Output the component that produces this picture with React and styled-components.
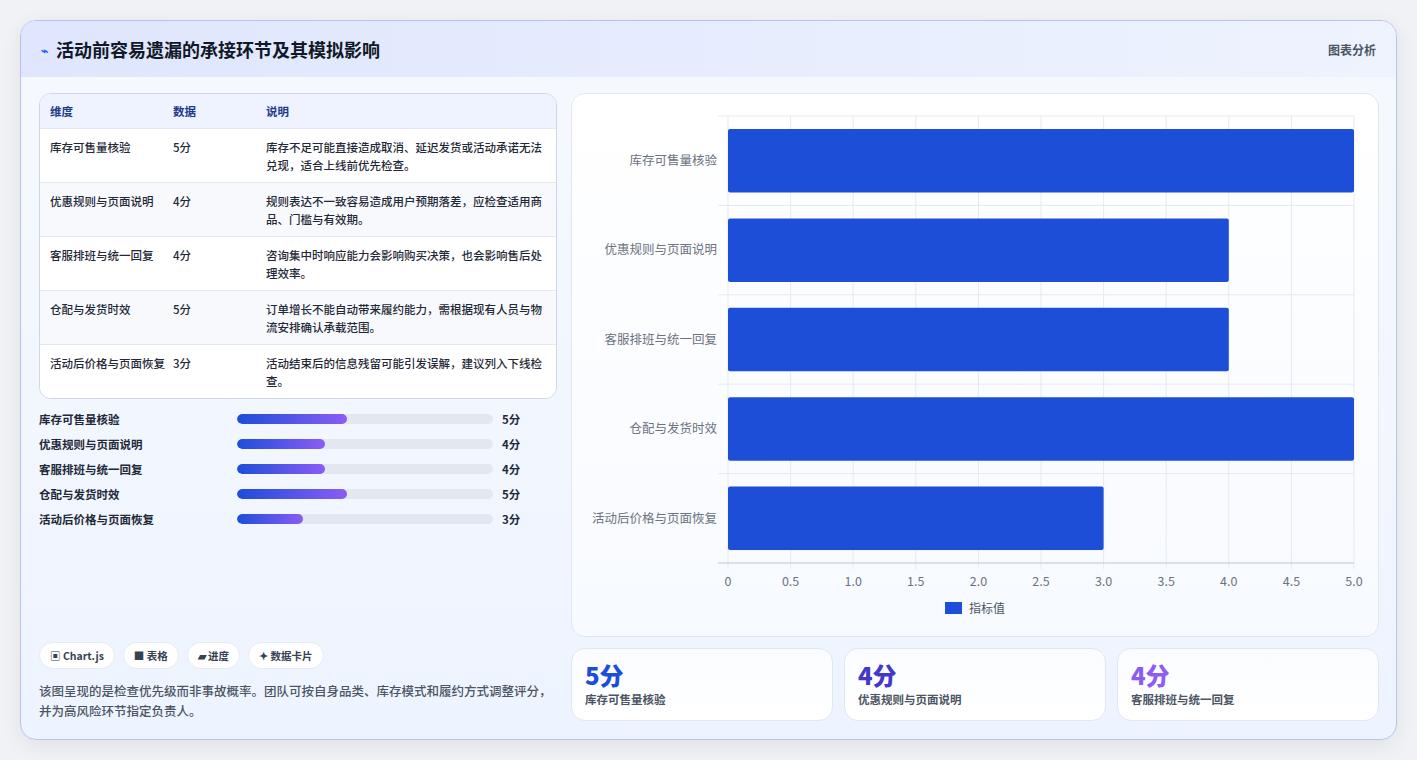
import React from "react";
import styled, { createGlobalStyle } from "styled-components";

const G = createGlobalStyle`
  body{margin:0;background:#f1f2f5;font-family:"Noto Sans CJK SC","Noto Sans",sans-serif;}
  *{box-sizing:border-box;}
`;
const Page = styled.div`padding:20px 20px 20px 20px;height:760px;`;
const Card = styled.div`
  width:1377px;height:720px;border:1px solid #b9c3ea;border-radius:16px;overflow:hidden;
  background:linear-gradient(180deg,#f6f9ff,#eef4ff);box-shadow:0 6px 20px rgba(30,40,80,.08);
  display:flex;flex-direction:column;`;
const Header = styled.div`
  height:56px;flex:none;display:flex;align-items:center;justify-content:space-between;padding:0 20px;
  background:linear-gradient(90deg,#dfe6fd,#eef3fe);`;
const Title = styled.h1`margin:0;font-size:18px;font-weight:700;color:#111827;display:flex;align-items:center;gap:8px;`;
const Tag = styled.span`font-size:12px;color:#4b5563;font-weight:600;`;
const Body = styled.div`flex:1;display:grid;grid-template-columns:518px 808px;gap:14px;padding:16px 18px 18px 18px;`;
const Left = styled.div`display:flex;flex-direction:column;`;
const Table = styled.div`border:1px solid #cfd6ea;border-radius:12px;overflow:hidden;background:#fff;`;
const Row = styled.div`
  display:grid;grid-template-columns:123px 93px 1fr;padding:${p=>p.$h?"8px 10px":"9px 10px 8px"};
  min-height:${p=>p.$h?"33px":"53px"};font-size:11.5px;line-height:18px;
  color:${p=>p.$h?"#1e3a8a":"#1f2937"};font-weight:${p=>p.$h?700:500};
  background:${p=>p.$h?"#eef3ff":p.$alt?"#f7f9fd":"#fff"};
  border-top:${p=>p.$h?"none":"1px solid #e3e8f3"};`;
const Bars = styled.div`display:flex;flex-direction:column;gap:7px;margin-top:11px;`;
const BarRow = styled.div`display:grid;grid-template-columns:189px 256px 1fr;column-gap:9px;align-items:center;height:18px;font-size:11.5px;font-weight:600;color:#1f2937;`;
const Track = styled.div`height:10px;border-radius:5px;background:#e3e7f0;overflow:hidden;`;
const Fill = styled.div`height:100%;border-radius:5px;background:linear-gradient(90deg,#1d4ed8,#8b5cf6);`;
const Spacer = styled.div`flex:1;`;
const Chips = styled.div`display:flex;gap:8px;`;
const Chip = styled.span`padding:5px 10px;border-radius:14px;background:#fff;border:1px solid #e6eaf3;font-size:10.5px;font-weight:700;color:#374151;`;
const Note = styled.p`margin:12px 0 0;font-size:12.5px;line-height:20px;color:#4b5563;font-weight:500;`;
const Right = styled.div`display:flex;flex-direction:column;gap:11px;`;
const ChartPanel = styled.div`height:544px;border:1px solid #e1e6f2;border-radius:14px;background:linear-gradient(180deg,#fff,#f7faff);`;
const Stats = styled.div`display:grid;grid-template-columns:repeat(3,1fr);gap:11px;flex:1;`;
const Stat = styled.div`border:1px solid #e1e6f2;border-radius:14px;background:linear-gradient(180deg,#fafcff,#fff);padding:10px 13px;`;
const Num = styled.div`font-size:24px;font-weight:800;line-height:32px;color:${p=>p.$c};`;
const Lab = styled.div`font-size:11.5px;font-weight:600;color:#4b5563;`;

const data=[["库存可售量核验",5,"库存不足可能直接造成取消、延迟发货或活动承诺无法兑现，适合上线前优先检查。"],
["优惠规则与页面说明",4,"规则表达不一致容易造成用户预期落差，应检查适用商品、门槛与有效期。"],
["客服排班与统一回复",4,"咨询集中时响应能力会影响购买决策，也会影响售后处理效率。"],
["仓配与发货时效",5,"订单增长不能自动带来履约能力，需根据现有人员与物流安排确认承载范围。"],
["活动后价格与页面恢复",3,"活动结束后的信息残留可能引发误解，建议列入下线检查。"]];

function Chart(){
  const x0=156,x1=782,y0=22,bh=89.4,sc=(x1-x0)/5;
  return <svg width="808" height="544">
    {Array.from({length:11}).map((_,i)=><line key={i} x1={x0+i*62.6} x2={x0+i*62.6} y1={y0} y2={y0+bh*5+6} stroke="#e6e9f0"/>)}
    {Array.from({length:6}).map((_,i)=><line key={i} x1={x0-10} x2={x1} y1={y0+i*bh} y2={y0+i*bh} stroke="#e6e9f0"/>)}
    <line x1={x0-10} x2={x1} y1={y0+bh*5} y2={y0+bh*5} stroke="#c8cdd8"/>
    {data.map((d,i)=><g key={i}>
      <rect x={x0} y={y0+i*bh+13} width={d[1]*sc} height={63.5} rx="2" fill="#1d4ed8"/>
      <text x={x0-11} y={y0+i*bh+49} textAnchor="end" fontSize="12.5" fill="#6b7280" fontFamily="Noto Sans CJK SC">{d[0]}</text>
    </g>)}
    {Array.from({length:11}).map((_,i)=><text key={i} x={x0+i*62.6} y={492} textAnchor="middle" fontSize="12.5" fill="#6b7280" fontFamily="Noto Sans CJK SC">{i===0?"0":(i/2).toFixed(1)}</text>)}
    <rect x="373" y="508" width="17" height="12" fill="#1d4ed8"/>
    <text x="397" y="519" fontSize="12" fill="#4b5563" fontFamily="Noto Sans CJK SC">指标值</text>
  </svg>;
}

export default function App(){
  return <Page><G/><Card>
    <Header><Title><span style={{color:"#2563eb",fontSize:12}}>⌁</span>活动前容易遗漏的承接环节及其模拟影响</Title><Tag>图表分析</Tag></Header>
    <Body>
      <Left>
        <Table>
          <Row $h><span>维度</span><span>数据</span><span>说明</span></Row>
          {data.map((d,i)=><Row key={i} $alt={i%2===1}><span>{d[0]}</span><span>{d[1]}分</span><span>{d[2]}</span></Row>)}
        </Table>
        <Bars>{data.map((d,i)=><BarRow key={i}><span>{d[0]}</span><Track><Fill style={{width:`${d[1]*8.6}%`}}/></Track><span>{d[1]}分</span></BarRow>)}</Bars>
        <Spacer/>
        <Chips><Chip>▣ Chart.js</Chip><Chip>■ 表格</Chip><Chip>▰ 进度</Chip><Chip>✦ 数据卡片</Chip></Chips>
        <Note>该图呈现的是检查优先级而非事故概率。团队可按自身品类、库存模式和履约方式调整评分，并为高风险环节指定负责人。</Note>
      </Left>
      <Right>
        <ChartPanel><Chart/></ChartPanel>
        <Stats>
          <Stat><Num $c="#1d4ed8">5分</Num><Lab>库存可售量核验</Lab></Stat>
          <Stat><Num $c="#4338ca">4分</Num><Lab>优惠规则与页面说明</Lab></Stat>
          <Stat><Num $c="#8b5cf6">4分</Num><Lab>客服排班与统一回复</Lab></Stat>
        </Stats>
      </Right>
    </Body>
  </Card></Page>;
}
